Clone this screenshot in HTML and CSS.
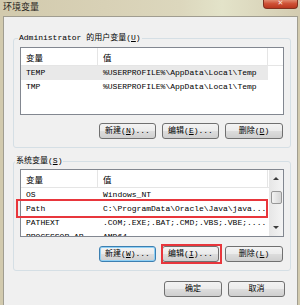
FILE: index.html
```html
<!DOCTYPE html>
<html lang="zh-CN">
<head>
<meta charset="utf-8">
<title>环境变量</title>
<link rel="stylesheet" href="styles.css">
</head>
<body>
<div class="window">
  <div class="titlebar">
    <span class="title">环境变量</span>
    <div class="close">✕</div>
  </div>
  <div class="client">
    <div class="group g1">
      <div class="group-label l1">Administrator 的用户变量(<u>U</u>)</div>
      <div class="list l-user">
        <div class="list-main">
          <div class="header">
            <div class="hcell h1">变量</div>
            <div class="hcell h2">值</div>
            <div class="hfill"></div>
          </div>
          <div class="row sel"><div class="c1">TEMP</div><div class="c2">%USERPROFILE%\AppData\Local\Temp</div></div>
          <div class="row"><div class="c1">TMP</div><div class="c2">%USERPROFILE%\AppData\Local\Temp</div></div>
        </div>
      </div>
      <div class="btns">
        <div class="btn w57">新建(<u>N</u>)...</div>
        <div class="btn w57">编辑(<u>E</u>)...</div>
        <div class="btn w58">删除(<u>D</u>)</div>
      </div>
    </div>

    <div class="group g2">
      <div class="group-label l2">系统变量(<u>S</u>)</div>
      <div class="list-wrap">
        <div class="list l-sys">
          <div class="list-main">
            <div class="header">
              <div class="hcell h1">变量</div>
              <div class="hcell h2">值</div>
            </div>
            <div class="row"><div class="c1">OS</div><div class="c2">Windows_NT</div></div>
            <div class="row"><div class="c1">Path</div><div class="c2">C:\ProgramData\Oracle\Java\java...</div></div>
            <div class="row"><div class="c1">PATHEXT</div><div class="c2">.COM;.EXE;.BAT;.CMD;.VBS;.VBE;....</div></div>
            <div class="row"><div class="c1">PROCESSOR_AR</div><div class="c2">AMD64</div></div>
          </div>
          <div class="scroll">
            <div class="arrow-box"><div class="tri-up"></div></div>
            <div class="thumb"></div>
            <div class="arrow-box bottom"><div class="tri-down"></div></div>
          </div>
        </div>
        <div class="annot-path"></div>
      </div>
      <div class="btns b2">
        <div class="btn w57 default">新建(<u>W</u>)...</div>
        <div class="btn w57 hl">编辑(<u>I</u>)...</div>
        <div class="btn w58">删除(<u>L</u>)</div>
      </div>
    </div>

    <div class="footer">
      <div class="btn w58">确定</div>
      <div class="btn w57">取消</div>
    </div>
  </div>
</div>
</body>
</html>
```

FILE: styles.css
```css
html, body {
  margin: 0;
  padding: 0;
}

body {
  width: 300px;
  height: 305px;
  overflow: hidden;
  background: #d2caae;
  font-family: "Liberation Mono", "Noto Sans CJK SC", monospace;
  font-size: 8px;
  color: #000;
}

.window {
  display: flex;
  flex-direction: column;
  height: 305px;
}

.titlebar {
  height: 16px;
  display: flex;
  align-items: flex-start;
  background: linear-gradient(90deg, #d2caad 0%, #d8d1b6 35%, #dcd7bd 60%, #e3e3c9 74%, #dcd8be 86%, #d3cbb0 100%);
}

.title {
  font-family: "Noto Sans CJK SC", sans-serif;
  font-size: 9px;
  line-height: 10px;
  margin: 2px 0 0 3px;
  color: #262420;
}

.close {
  margin-left: auto;
  margin-right: 2px;
  width: 35px;
  height: 9px;
  box-sizing: border-box;
  border: 1px solid #80301f;
  border-top: none;
  border-radius: 0 0 4px 4px;
  background: linear-gradient(#e08a70, #cf5136 45%, #b9371f 100%);
  color: #fbe9e2;
  font-family: "DejaVu Sans", sans-serif;
  font-size: 7px;
  line-height: 7px;
  text-align: center;
}

.client {
  flex: 1;
  margin: 0 2px 0 3px;
  border: 1px solid #a09d90;
  border-bottom: none;
  background: #f0f0f0;
  padding: 21px 6px 0 9px;
}

.group {
  border: 1px solid #d5dfe5;
  border-radius: 3px;
  padding: 0 6px 8px 6px;
}

.g2 {
  margin-top: 13px;
}

.group-label {
  width: fit-content;
  background: #f0f0f0;
  line-height: 10px;
  padding: 0 1px;
  margin-top: -6px;
  white-space: nowrap;
}

.l1 { margin-left: -2px; }
.l2 { margin-left: -5px; }

.list-wrap {
  position: relative;
  margin-top: 3px;
}

.list {
  height: 68px;
  box-sizing: border-box;
  border: 1px solid #828790;
  background: #fff;
  display: flex;
  overflow: hidden;
}

.l-user {
  margin-top: 4px;
}

.list-main {
  flex: 1;
  min-width: 0;
}

.header {
  height: 18px;
  box-sizing: border-box;
  display: flex;
  border-bottom: 1px solid #e5e5e5;
}

.hcell {
  font-family: "Noto Sans CJK SC", sans-serif;
  font-size: 8.5px;
  line-height: 17px;
  padding: 1px 0 0 5px;
  box-sizing: border-box;
  border-right: 1px solid #e5e5e5;
  height: 17px;
}

.h1 { width: 77px; }
.h2 { width: 170px; }
.hfill { flex: 1; }

.row {
  display: flex;
  width: 247px;
  height: 14px;
  line-height: 14px;
  white-space: nowrap;
}

.row.sel {
  background: #e9e9e9;
}

.c1 {
  width: 77px;
  padding-left: 5px;
  box-sizing: border-box;
  overflow: hidden;
}

.c2 {
  width: 170px;
  padding-left: 5px;
  box-sizing: border-box;
  overflow: hidden;
}

.scroll {
  width: 14px;
  display: flex;
  flex-direction: column;
  align-items: center;
  background: linear-gradient(90deg, #e6e6e6, #f4f4f4);
}

.arrow-box {
  height: 17px;
  width: 14px;
  display: flex;
  align-items: center;
  justify-content: center;
}

.arrow-box.bottom {
  margin-top: auto;
}

.tri-up {
  width: 0;
  height: 0;
  border-left: 3px solid transparent;
  border-right: 3px solid transparent;
  border-bottom: 3px solid #3c3c3c;
}

.tri-down {
  width: 0;
  height: 0;
  border-left: 3px solid transparent;
  border-right: 3px solid transparent;
  border-top: 3px solid #3c3c3c;
}

.thumb {
  margin-top: 4px;
  width: 11px;
  height: 13px;
  box-sizing: border-box;
  border: 1px solid #979797;
  border-radius: 2px;
  background: linear-gradient(90deg, #f3f3f3, #e4e4e4 50%, #d6d6d6);
}

.annot-path {
  position: absolute;
  left: -4px;
  top: 30px;
  width: 252px;
  height: 19px;
  box-sizing: border-box;
  border: 2px solid #e8363c;
}

.btns {
  display: flex;
  justify-content: flex-end;
  gap: 6px;
  margin-top: 8px;
  padding-right: 1px;
}

.b2 {
  margin-top: 9px;
}

.btn {
  height: 16px;
  box-sizing: border-box;
  border: 1px solid #707070;
  border-radius: 3px;
  background: linear-gradient(#f3f3f3, #ebebeb 50%, #dddddd 50%, #cfcfcf);
  line-height: 14px;
  text-align: center;
  white-space: nowrap;
  position: relative;
}

.btn u, .group-label u {
  text-decoration-thickness: 1px;
  text-underline-offset: 1px;
}

.w57 { width: 57px; }
.w58 { width: 58px; }

.btn.default {
  border-color: #3c7fb1;
  box-shadow: inset 0 0 0 1px #8fd0f5;
}

.btn.hl::after {
  content: "";
  position: absolute;
  left: -2px;
  top: -3px;
  width: 61px;
  height: 20px;
  box-sizing: border-box;
  border: 2px solid #e8363c;
}

.footer {
  display: flex;
  justify-content: flex-end;
  gap: 6px;
  margin-top: 10px;
  padding-right: 6px;
}
```
